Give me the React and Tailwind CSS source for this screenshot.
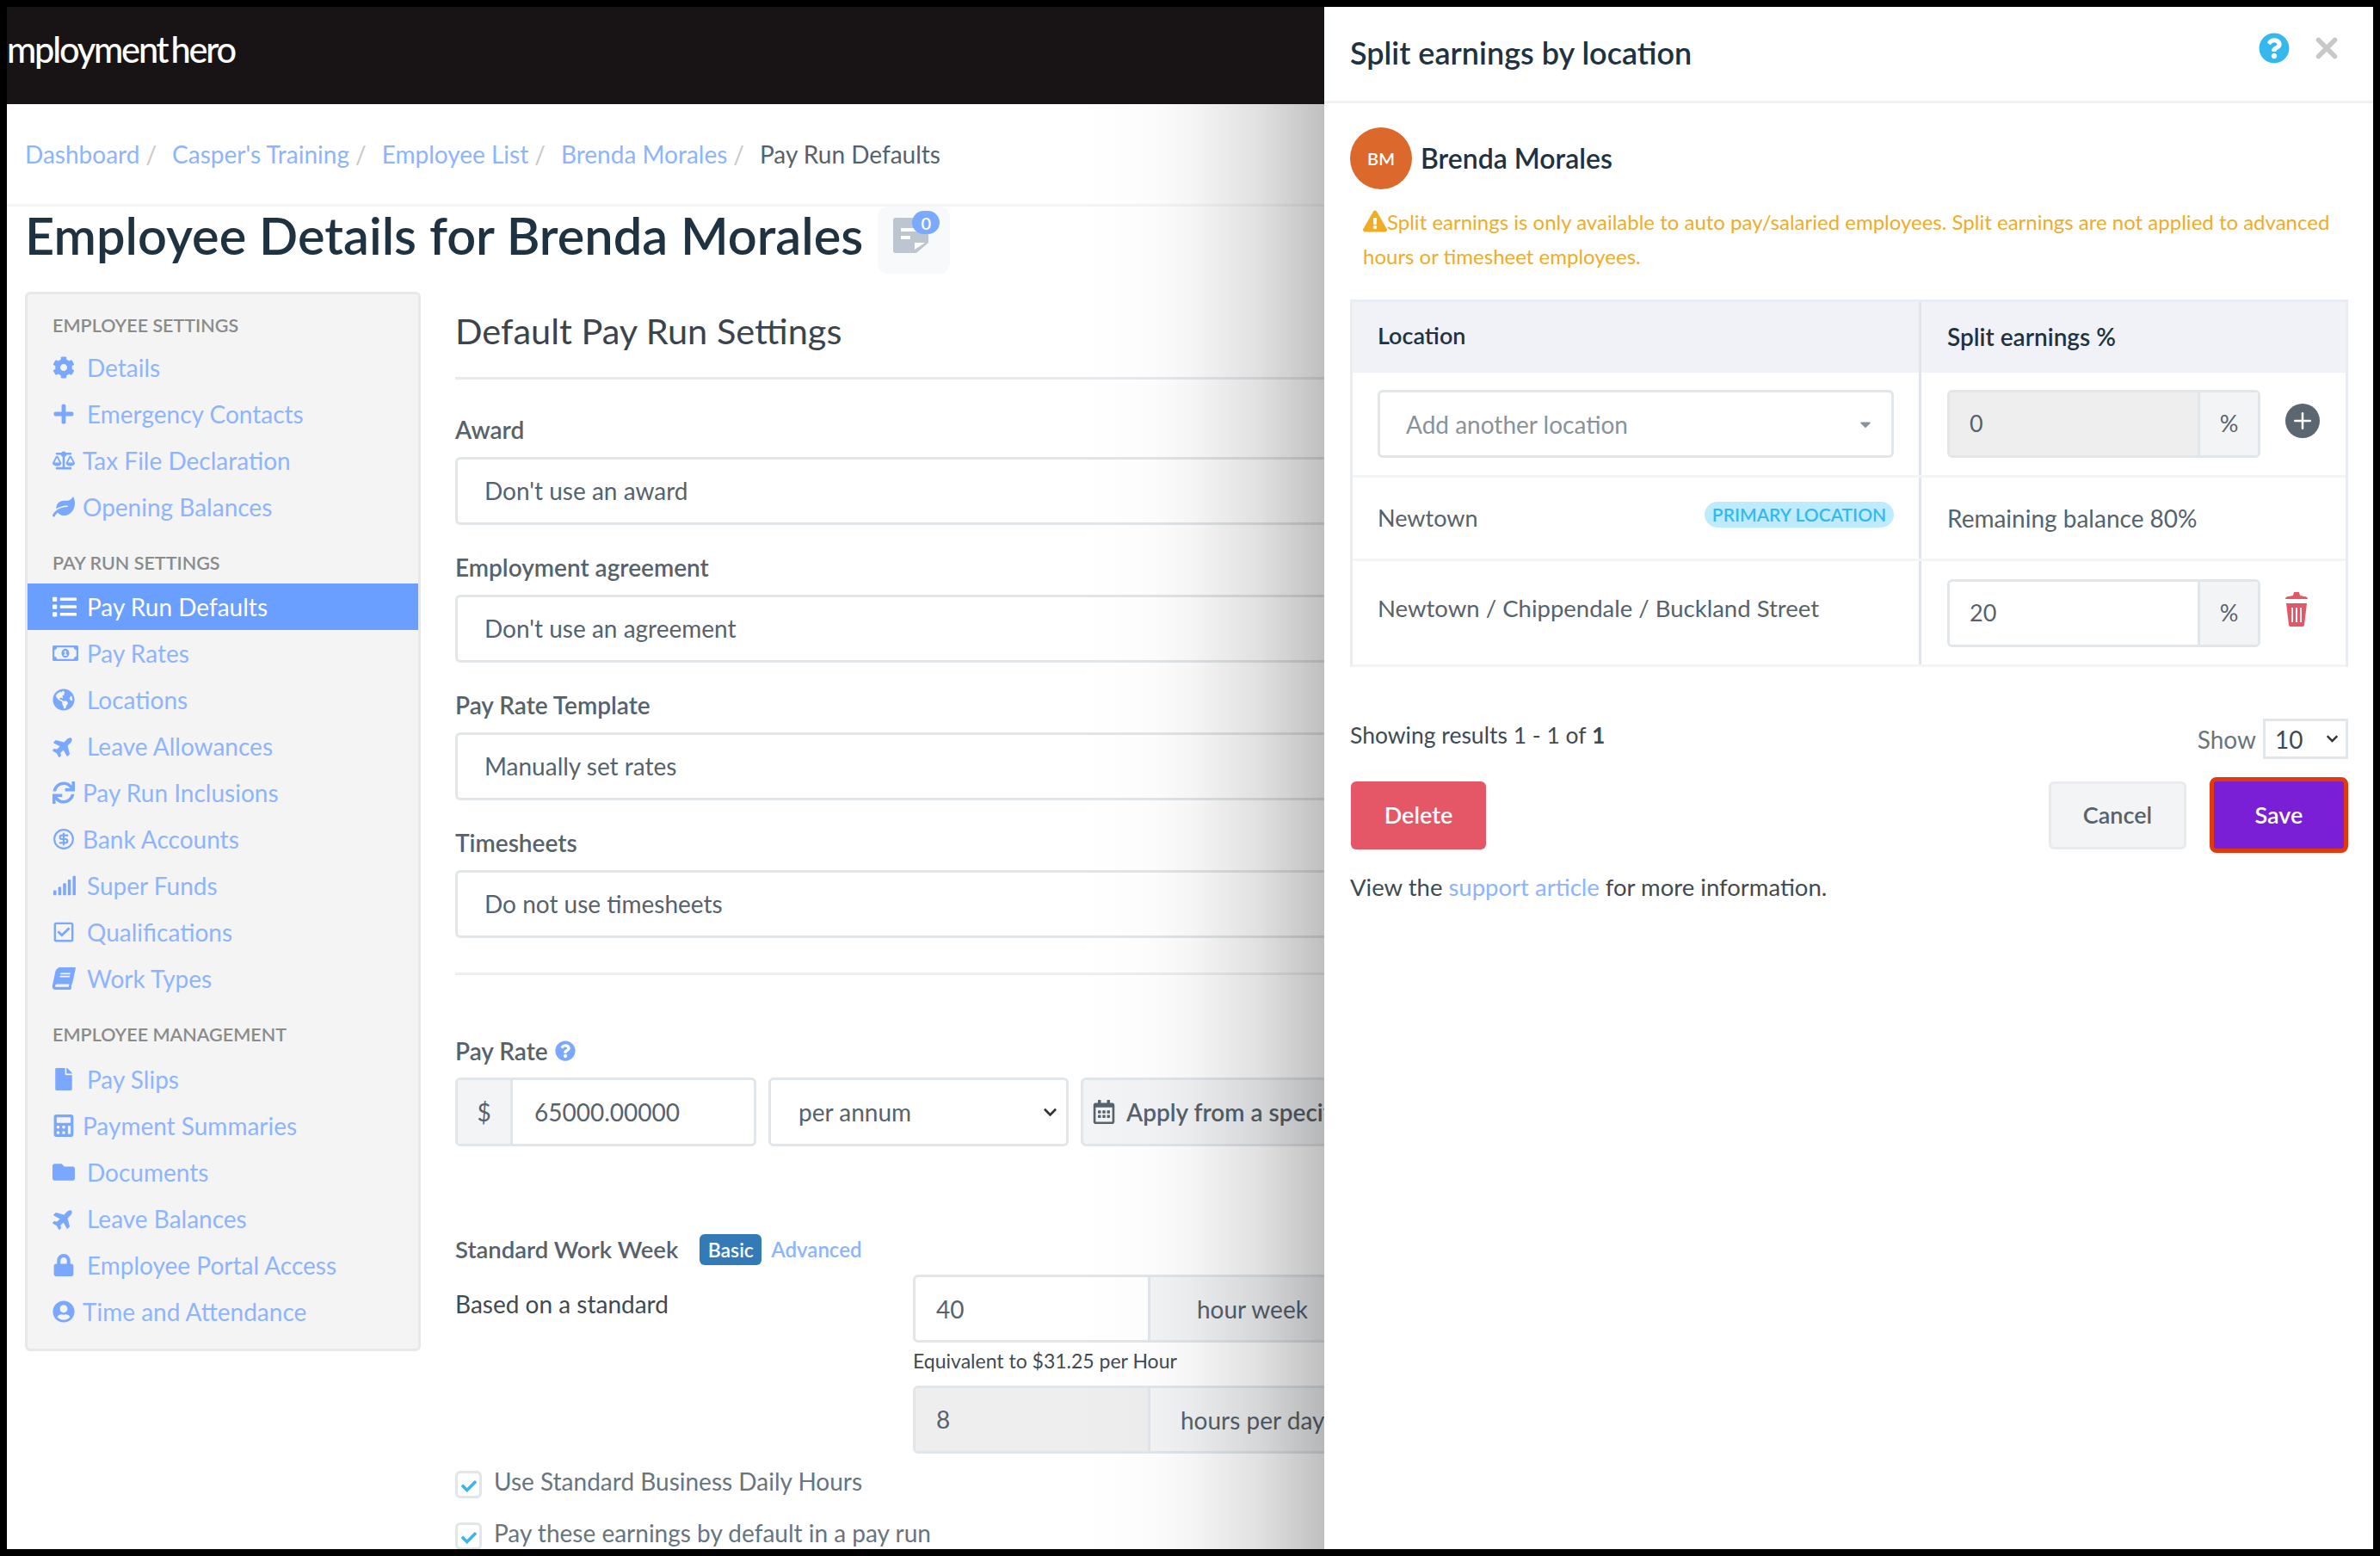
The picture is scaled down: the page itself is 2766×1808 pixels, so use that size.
import React from 'react';
import {
  FaCog, FaPlus, FaBalanceScale, FaLeaf, FaList, FaRegMoneyBillAlt, FaGlobeAmericas, FaPlane, FaSync,
  FaSignal, FaRegCheckSquare, FaBook, FaFile, FaCalculator, FaFolder, FaLock, FaUserCircle,
  FaRegCalendarAlt, FaExclamationTriangle, FaQuestionCircle, FaChevronDown, FaCheck, FaCaretDown,
} from 'react-icons/fa';
import { CircleDollarSign, Plus, X } from 'lucide-react';

const sections = [
  {
    title: 'EMPLOYEE SETTINGS',
    items: [
      { label: 'Details', icon: FaCog },
      { label: 'Emergency Contacts', icon: FaPlus },
      { label: 'Tax File Declaration', icon: FaBalanceScale, near: true },
      { label: 'Opening Balances', icon: FaLeaf, near: true },
    ],
  },
  {
    title: 'PAY RUN SETTINGS',
    items: [
      { label: 'Pay Run Defaults', icon: FaList, active: true, size: 28 },
      { label: 'Pay Rates', icon: FaRegMoneyBillAlt, size: 30 },
      { label: 'Locations', icon: FaGlobeAmericas },
      { label: 'Leave Allowances', icon: FaPlane, tilt: '-rotate-45' },
      { label: 'Pay Run Inclusions', icon: FaSync, near: true },
      { label: 'Bank Accounts', icon: CircleDollarSign, near: true },
      { label: 'Super Funds', icon: FaSignal, size: 28 },
      { label: 'Qualifications', icon: FaRegCheckSquare },
      { label: 'Work Types', icon: FaBook, tilt: '-skew-x-12' },
    ],
  },
  {
    title: 'EMPLOYEE MANAGEMENT',
    items: [
      { label: 'Pay Slips', icon: FaFile },
      { label: 'Payment Summaries', icon: FaCalculator, near: true },
      { label: 'Documents', icon: FaFolder },
      { label: 'Leave Balances', icon: FaPlane, tilt: '-rotate-45' },
      { label: 'Employee Portal Access', icon: FaLock },
      { label: 'Time and Attendance', icon: FaUserCircle, near: true },
    ],
  },
];

const fields = [
  { label: 'Award', value: "Don't use an award" },
  { label: 'Employment agreement', value: "Don't use an agreement" },
  { label: 'Pay Rate Template', value: 'Manually set rates' },
  { label: 'Timesheets', value: 'Do not use timesheets' },
];

const headingMargin = ['mb-2', 'mb-[10px]', 'mb-[11px]'];

const Sidebar = () => (
  <aside className="w-[460px] h-[1231px] shrink-0 ml-[21px] pt-[22px] bg-[#f4f4f4] border-[3px] border-[#e8e8e8] rounded-md">
    {sections.map((section, i) => (
      <div key={section.title} className={i > 0 ? 'mt-6' : ''}>
        <h4 className={`h-7 pl-[29px] flex items-center text-[21.5px] font-semibold text-[#8b8b8b] ${headingMargin[i]}`}>
          {section.title}
        </h4>
        {section.items.map((item) => {
          const Icon = item.icon;
          return (
            <div
              key={item.label}
              className={`h-[54px] pl-[29px] flex items-center text-[28px] ${item.active ? 'bg-[#6a9eff] text-white' : 'text-[#8db4ff]'}`}
            >
              <span className={`shrink-0 flex items-center ${item.near ? 'w-[35px]' : 'w-[40px]'}`}>
                <Icon size={item.size || 26} className={`${item.tilt || ''} ${item.active ? 'text-white' : 'text-[#7aa8ff]'}`} />
              </span>
              {item.label}
            </div>
          );
        })}
      </div>
    ))}
  </aside>
);

const Field = ({ label, value }) => (
  <div className="mb-[35px]">
    <label className="block h-7 mb-[18px] leading-7 text-[28px] font-semibold text-[#56626c]">{label}</label>
    <div className="h-[79px] px-[31px] pb-[2px] flex items-center bg-white border-[3px] border-[#e1e6ea] rounded-md text-[28px] text-[#56626c]">
      {value}
    </div>
  </div>
);

const Checkbox = ({ label }) => (
  <div className="h-[60px] flex items-start gap-[14px] text-[28px] text-[#69747d]">
    <span className="w-[31px] h-[32px] shrink-0 flex items-center justify-center bg-white border-[3px] border-[#e1e6ea] rounded-md">
      <FaCheck size={18} className="text-[#35b8ee] mt-1" />
    </span>
    <span className="leading-[24px]">{label}</span>
  </div>
);

const PayRunSettings = () => (
  <section className="ml-[40px] w-[1400px] shrink-0">
    <h2 className="mt-[28px] h-[34px] leading-[34px] text-[41.5px] text-[#3b444c]">Default Pay Run Settings</h2>
    <div className="mt-[37px] mb-[44px] h-[3px] bg-[#e7e9ec]" />
    {fields.map((f) => (
      <Field key={f.label} label={f.label} value={f.value} />
    ))}
    <div className="mt-[40px] h-[3px] bg-[#eceef0]" />

    <div className="mt-[74px] mb-[17px] h-7 flex items-center gap-2 text-[28px] font-semibold text-[#56626c]">
      Pay Rate <FaQuestionCircle size={24} className="text-[#7aa8ff]" />
    </div>
    <div className="flex gap-[14px] h-[80px] text-[28px]">
      <div className="w-[350px] flex border-[3px] border-[#e1e6ea] rounded-md overflow-hidden text-[#56626c]">
        <span className="w-[64px] flex items-center justify-center bg-[#f3f4f6] border-r-[3px] border-[#e1e6ea]">$</span>
        <span className="flex-1 pl-[25px] flex items-center">65000.00000</span>
      </div>
      <div className="w-[349px] pl-[32px] pr-[10px] flex items-center justify-between border-[3px] border-[#e1e6ea] rounded-md text-[#56626c]">
        per annum
        <FaChevronDown size={17} className="text-[#333]" />
      </div>
      <div className="w-[600px] pl-[10px] flex items-center gap-[12px] bg-[#f3f4f6] border-[3px] border-[#e1e6ea] rounded-md font-semibold text-[#56626c]">
        <FaRegCalendarAlt size={28} />
        Apply from a specific date
      </div>
    </div>

    <div className="mt-[102px] h-[36px] flex items-center text-[27.5px]">
      <span className="font-semibold text-[#56626c]">Standard Work Week</span>
      <span className="ml-[25px] w-[72px] h-[36px] flex items-center justify-center bg-[#337ab7] rounded-md text-[23px] font-semibold text-white">Basic</span>
      <span className="ml-[11px] text-[24px] font-semibold text-[#8db4ff]">Advanced</span>
    </div>

    <div className="mt-[11px] flex">
      <div className="w-[532px] shrink-0 pt-[20px] leading-[28px] text-[28px] text-[#3f4a53]">Based on a standard</div>
      <div className="w-[600px]">
        <div className="h-[79px] flex border-[3px] border-[#e1e6ea] rounded-md overflow-hidden text-[28px] text-[#56626c]">
          <span className="w-[270px] pl-[24px] flex items-center">40</span>
          <span className="flex-1 pl-[54px] flex items-center bg-[#f3f4f6] border-l-[3px] border-[#e1e6ea]">hour week</span>
        </div>
        <div className="mt-[9px] mb-[17px] h-[24px] leading-[24px] text-[23px] text-[#3f4a53]">Equivalent to $31.25 per Hour</div>
        <div className="h-[79px] flex border-[3px] border-[#e1e6ea] rounded-md overflow-hidden text-[28px] text-[#56626c]">
          <span className="w-[270px] pl-[24px] pb-[2px] flex items-center bg-[#eeeeee]">8</span>
          <span className="flex-1 pl-[35px] flex items-center bg-[#f3f4f6] border-l-[3px] border-[#e1e6ea]">hours per day</span>
        </div>
      </div>
    </div>

    <div className="mt-[20px]">
      <Checkbox label="Use Standard Business Daily Hours" />
      <Checkbox label="Pay these earnings by default in a pay run" />
    </div>
  </section>
);

const SuffixInput = ({ value, disabled }) => (
  <div className="w-[364px] h-[79px] flex border-[3px] border-[#e1e6ea] rounded-md overflow-hidden text-[27px] text-[#56626c]">
    <span className={`w-[288px] pl-[23px] flex items-center ${disabled ? 'bg-[#eeeeee]' : 'bg-white'}`}>{value}</span>
    <span className="flex-1 flex items-center justify-center bg-[#f3f4f6] border-l-[3px] border-[#e1e6ea]">%</span>
  </div>
);

const TrashIcon = () => (
  <svg viewBox="0 0 26 40" className="-mt-[8px] w-[26px] h-[40px] shrink-0">
    <path d="M0 8c0-2 2-3 4-3l5-1 1-4h6l1 4 5 1c2 0 4 1 4 3z" fill="#e55667" />
    <path d="M1 13h24l-3 25q0 2-2 2H6q-2 0-2-2z" fill="#e55667" />
    <path d="M7 18h2v17H7zM12 18h2v17h-2zM17 18h2v17h-2z" fill="#fff" />
  </svg>
);

const SplitEarningsPanel = () => (
  <aside className="absolute top-0 right-0 bottom-0 w-[1219px] bg-white">
    <div className="h-[112px] px-[30px] flex items-center justify-between border-b-[3px] border-[#eef1f4]">
      <h3 className="-mt-[3px] text-[36px] font-semibold text-[#1f3241]">Split earnings by location</h3>
      <div className="flex items-center gap-[24px] mr-[5px] -mt-[14px]">
        <FaQuestionCircle size={36} className="text-[#35b8ee]" />
        <X size={38} strokeWidth={3.5} className="text-[#c8c8c8]" />
      </div>
    </div>

    <div className="pl-[30px] pr-[29px] pt-[28px]">
      <div className="flex items-center gap-[10px] h-[72px]">
        <span className="w-[72px] h-[72px] flex items-center justify-center rounded-full bg-[#dc692b] text-[20px] font-semibold text-white">BM</span>
        <span className="text-[32px] font-semibold text-[#1f3241]">Brenda Morales</span>
      </div>

      <p className="mt-[18px] pl-[15px] text-[24px] leading-[40px] text-[#f0ac27]">
        <FaExclamationTriangle size={28} className="inline -mt-[8px]" />
        Split earnings is only available to auto pay/salaried employees. Split earnings are not applied to advanced hours or timesheet employees.
      </p>

      <div className="mt-[30px] border-x-[3px] border-[#e9ecf0] text-[27px] text-[#56626c]">
        <div className="grid grid-cols-[661px_1fr] h-[85px] bg-[#f0f2f7] border-t-[3px] border-[#e9ecf0] font-semibold text-[#1f3241]">
          <div className="pl-[29px] pb-[3px] flex items-center border-r-[3px] border-[#e1e5ea]">Location</div>
          <div className="pl-[30px] pb-[3px] flex items-center text-[28px]">Split earnings %</div>
        </div>
        <div className="grid grid-cols-[661px_1fr] h-[122px] border-b-[3px] border-[#f3f4f6]">
          <div className="pl-[29px] pr-[29px] flex items-center border-r-[3px] border-[#e1e5ea]">
            <div className="w-full h-[79px] pl-[30px] pr-[20px] flex items-center justify-between border-[3px] border-[#e1e6ea] rounded-md text-[28px] text-[#8a9299]">
              Add another location
              <FaCaretDown size={20} />
            </div>
          </div>
          <div className="pl-[30px] flex items-center gap-[29px]">
            <SuffixInput value="0" disabled />
            <span className="-mt-[8px] w-[40px] h-[40px] flex items-center justify-center rounded-full bg-[#5a6670]">
              <Plus size={30} strokeWidth={2} className="text-white" />
            </span>
          </div>
        </div>
        <div className="grid grid-cols-[661px_1fr] h-[97px] border-b-[3px] border-[#f3f4f6]">
          <div className="pl-[29px] pr-[29px] flex items-center justify-between border-r-[3px] border-[#e1e5ea]">
            Newtown
            <span className="-mt-[8px] w-[220px] h-[30px] flex items-center justify-center rounded-full bg-[#bdecff] text-[21px] font-semibold text-[#35b8ee]">PRIMARY LOCATION</span>
          </div>
          <div className="pl-[30px] flex items-center text-[28px]">Remaining balance 80%</div>
        </div>
        <div className="grid grid-cols-[661px_1fr] h-[123px] border-b-[3px] border-[#f3f4f6]">
          <div className="pl-[29px] pt-[38px] leading-[34px] text-[27.5px] border-r-[3px] border-[#e1e5ea]">Newtown / Chippendale / Buckland Street</div>
          <div className="pl-[30px] flex items-center gap-[29px]">
            <SuffixInput value="20" />
            <TrashIcon />
          </div>
        </div>
      </div>

      <div className="mt-[60px] h-[47px] flex items-center justify-between text-[27px]">
        <span className="-mt-[8px] text-[26.5px] text-[#3f4a53]">
          Showing results 1 - 1 of <b className="font-bold">1</b>
        </span>
        <div className="flex items-center gap-[8px] text-[28px] text-[#69747d]">
          Show
          <span className="w-[99px] h-[47px] pl-[11px] pr-[8px] flex items-center justify-between border-[3px] border-[#e1e6ea] text-[#3f4a53]">
            10
            <FaChevronDown size={15} className="text-[#333]" />
          </span>
        </div>
      </div>

      <div className="mt-[21px] h-[88px] flex items-center justify-between text-[27px] font-semibold">
        <button className="ml-px w-[157px] h-[79px] bg-[#e55667] rounded-md text-white">Delete</button>
        <div className="flex items-center gap-[27px]">
          <button className="w-[160px] h-[79px] bg-[#f3f4f6] border-[3px] border-[#e8eaed] rounded-md text-[#56626c]">Cancel</button>
          <button className="w-[161px] h-[88px] bg-[#7b1fd6] border-[5px] border-[#e23a0c] rounded-lg text-white">Save</button>
        </div>
      </div>

      <p className="mt-[25px] leading-[30px] text-[27.5px] text-[#3f4a53]">
        View the <a className="text-[#8db4ff]">support article</a> for more information.
      </p>
    </div>
  </aside>
);

export default function App() {
  return (
    <div className="w-[2766px] h-[1808px] p-2 bg-black overflow-hidden" style={{ fontFamily: '"Lato", "Liberation Sans", sans-serif' }}>
      <div className="relative h-full flex flex-col bg-white overflow-hidden">
        <header className="h-[113px] shrink-0 flex items-center bg-[#181415] overflow-hidden">
          <span className="-mt-[15px] text-[41.5px] font-medium tracking-[-2.2px] text-white">
            mployment<span className="ml-[4px]">hero</span>
          </span>
        </header>

        <nav className="h-[119px] shrink-0 px-[21px] flex items-center gap-[7px] border-b-[3px] border-[#f5f5f5] text-[28px]">
          {['Dashboard', "Casper's Training", 'Employee List', 'Brenda Morales'].map((crumb) => (
            <React.Fragment key={crumb}>
              <a className="text-[#8db4ff]">{crumb}</a>
              <span className="text-[#c8c8c8] mr-[11px]">/</span>
            </React.Fragment>
          ))}
          <span className="text-[#56626c]">Pay Run Defaults</span>
        </nav>

        <div className="h-[78px] shrink-0 pl-[21px] flex items-start">
          <h1 className="h-[66px] leading-[66px] text-[59.5px] font-semibold text-[#1f3241]">Employee Details for Brenda Morales</h1>
          <span className="relative ml-[17px] w-[84px] h-[78px] pl-[18px] pt-[13px] bg-[#f7f9fb] rounded-xl">
            <svg viewBox="0 0 41 41" className="w-[41px] h-[41px]">
              <path d="M3 0h35a3 3 0 0 1 3 3v26L27 41H3a3 3 0 0 1-3-3V3a3 3 0 0 1 3-3z" fill="#bcc5d0" />
              <path d="M9 12h20v4H9zM9 21h11v4H9z" fill="#fff" />
              <path d="M25 29h12L25 37z" fill="#fff" />
            </svg>
            <span className="absolute top-[5px] left-[40px] w-[32px] h-[27px] flex items-center justify-center rounded-full bg-[#7aa9ff] text-[20px] font-semibold text-white">0</span>
          </span>
        </div>

        <div className="mt-[21px] flex flex-1 items-start overflow-hidden">
          <Sidebar />
          <PayRunSettings />
        </div>

        {/* shadow thrown by the drawer */}
        <div className="absolute top-[113px] bottom-0 right-[1219px] w-[289px] bg-[linear-gradient(to_right,transparent_0%,rgba(0,0,0,0.01)_31%,rgba(0,0,0,0.04)_47%,rgba(0,0,0,0.12)_74%,rgba(0,0,0,0.25)_100%)]" />
        <SplitEarningsPanel />
      </div>
    </div>
  );
}
